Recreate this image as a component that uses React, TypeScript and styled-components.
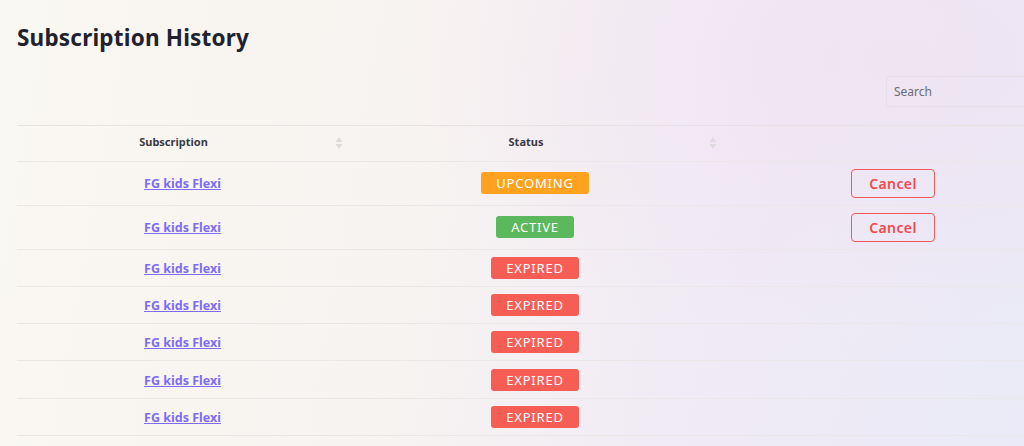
import React from "react";
import styled, { createGlobalStyle } from "styled-components";

type Status = "UPCOMING" | "ACTIVE" | "EXPIRED";

interface Subscription {
  name: string;
  status: Status;
  cancellable: boolean;
}

const rows: Subscription[] = [
  { name: "FG kids Flexi", status: "UPCOMING", cancellable: true },
  { name: "FG kids Flexi", status: "ACTIVE", cancellable: true },
  { name: "FG kids Flexi", status: "EXPIRED", cancellable: false },
  { name: "FG kids Flexi", status: "EXPIRED", cancellable: false },
  { name: "FG kids Flexi", status: "EXPIRED", cancellable: false },
  { name: "FG kids Flexi", status: "EXPIRED", cancellable: false },
  { name: "FG kids Flexi", status: "EXPIRED", cancellable: false },
];

const statusColors: Record<Status, string> = {
  UPCOMING: "#ffa21f",
  ACTIVE: "#5cb85c",
  EXPIRED: "#f65e55",
};

const GlobalStyle = createGlobalStyle`
  html, body {
    margin: 0;
    overflow: hidden;
  }
  body {
    font-family: "Noto Sans", "Open Sans", sans-serif;
    background: #f8f5f3;
  }
`;

const SortIcon = () => (
  <svg width="8" height="14" viewBox="0 0 8 14">
    <path d="M4 1 L7.5 6 H0.5 Z" fill="#dcdcdc" />
    <path d="M4 13 L7.5 8 H0.5 Z" fill="#dcdcdc" />
  </svg>
);

const SubscriptionHistory: React.FC = () => {
  return (
    <Page>
      <GlobalStyle />
      <Title>Subscription History</Title>
      <Toolbar>
        <SearchInput placeholder="Search" />
      </Toolbar>
      <Table>
        <colgroup>
          <col style={{ width: 331 }} />
          <col style={{ width: 374 }} />
          <col style={{ width: 342 }} />
        </colgroup>
        <thead>
          <tr>
            <HeadCell>
              Subscription
              <SortWrap>
                <SortIcon />
              </SortWrap>
            </HeadCell>
            <HeadCell>
              Status
              <SortWrap>
                <SortIcon />
              </SortWrap>
            </HeadCell>
            <HeadCell />
          </tr>
        </thead>
        <tbody>
          {rows.map((row, i) => (
            <tr key={i}>
              <Cell>
                <PlanLink href="#">{row.name}</PlanLink>
              </Cell>
              <Cell>
                <Badge $color={statusColors[row.status]}>{row.status}</Badge>
              </Cell>
              <Cell>
                {row.cancellable && <CancelButton>Cancel</CancelButton>}
              </Cell>
            </tr>
          ))}
        </tbody>
      </Table>
    </Page>
  );
};

const Page = styled.div`
  width: 1064px;
  min-height: 446px;
  box-sizing: border-box;
  padding: 22px 0 0 17px;
  background:
    radial-gradient(ellipse 500px 300px at 900px 60px, rgba(240, 224, 240, 0.6), transparent),
    linear-gradient(100deg, #faf8f2 0%, #f7f3f1 40%, #efeaf5 70%, #e9eaf8 100%);
`;

const Title = styled.h1`
  margin: 0;
  font-size: 22.5px;
  font-weight: 700;
  line-height: 32px;
  color: #22222e;
  letter-spacing: 0.2px;
`;

const Toolbar = styled.div`
  display: flex;
  justify-content: flex-end;
  padding-top: 22px;
  padding-bottom: 18px;
`;

const SearchInput = styled.input`
  width: 178px;
  height: 31px;
  box-sizing: border-box;
  border: 1px solid #e6e0e6;
  border-radius: 4px;
  background: transparent;
  padding: 0 7px;
  font-family: "Noto Sans", sans-serif;
  font-size: 12px;
  color: #444;
  outline: none;

  &::placeholder {
    color: #6c6c74;
  }
`;

const Table = styled.table`
  width: 1047px;
  table-layout: fixed;
  border-collapse: collapse;
  border-top: 1px solid #e6e2e2;

  tr {
    border-bottom: 1px solid #ebe7e7;
  }
`;

const HeadCell = styled.th`
  position: relative;
  height: 35.5px;
  box-sizing: border-box;
  padding: 0 28px 2px 10px;
  font-size: 11px;
  line-height: 14px;
  font-weight: 700;
  color: #3b3b45;
  text-align: center;
`;

const SortWrap = styled.span`
  position: absolute;
  right: 5px;
  top: 50%;
  transform: translateY(-50%);
  display: flex;
`;

const Cell = styled.td`
  padding: 7px 10px;
  box-sizing: border-box;
  text-align: center;
  vertical-align: middle;
  height: 37.3px;
  line-height: 18px;
`;

const PlanLink = styled.a`
  font-size: 12.5px;
  font-weight: 700;
  color: #7d6cf5;
  text-decoration: underline;
`;

const Badge = styled.span<{ $color: string }>`
  display: inline-block;
  vertical-align: middle;
  height: 22px;
  line-height: 22px;
  padding: 0 15px;
  border-radius: 3px;
  background: ${(p) => p.$color};
  color: #fff;
  font-size: 13px;
  letter-spacing: 0.8px;
`;

const CancelButton = styled.button`
  width: 84px;
  height: 29px;
  border: 1px solid #f05a5a;
  border-radius: 4px;
  background: transparent;
  color: #f04a4f;
  font-family: "Noto Sans", sans-serif;
  font-size: 14px;
  font-weight: 600;
  letter-spacing: 0.4px;
  cursor: pointer;
  display: block;
  margin: 0 auto;
`;

export default SubscriptionHistory;
